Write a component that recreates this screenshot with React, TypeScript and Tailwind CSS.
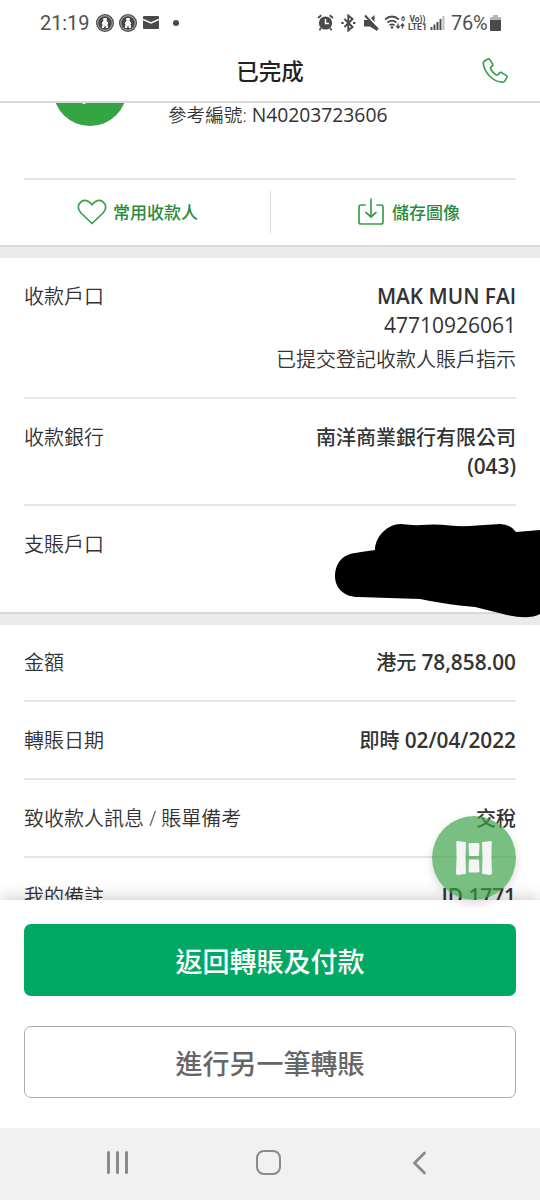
import React from 'react'

type RowProps = {
    label: string
    last?: boolean
    children?: React.ReactNode
}

const StatusBar: React.FC = () => (
    <div className="flex h-[45px] items-center pl-10 pr-[39px] font-['Roboto',sans-serif] text-[20px] text-[#505050]">
        <span className="w-[49px] whitespace-nowrap tracking-[-0.1px]">21:19</span>
        <div className="ml-[7px] flex items-center gap-[5px]">
            <BadgeIcon />
            <BadgeIcon />
        </div>
        <svg className="ml-[6px]" width="16" height="13" viewBox="0 0 16 13">
            <rect width="16" height="13" rx="1" fill="#4a4a4a" />
            <path d="M0 3.5 L8 7 L16 3.5" fill="none" stroke="#fff" strokeWidth="1.6" />
        </svg>
        <span className="ml-[14px] h-[6px] w-[6px] rounded-full bg-[#4a4a4a]" />
        <svg className="ml-auto" width="128" height="18" viewBox="0 0 128 18" fill="none" stroke="#4a4a4a">
            {/* alarm */}
            <circle cx="8.5" cy="9" r="6.6" fill="#4a4a4a" stroke="none" />
            <path d="M8.5 5v4.4h3.4" stroke="#fff" strokeWidth="1.5" />
            <path d="M1 4 4.3 1.2M16 4l-3.3-2.8M4 14l-1.6 2.2M13 14l1.6 2.2" strokeWidth="1.8" />
            {/* bluetooth */}
            <path d="M27.5 5l8 8-4.2 3.5V1.5l4.2 3.500-8 8" strokeWidth="1.9" />
            <path d="M24.3 9h2.4M36 9h2.4" strokeWidth="2.2" />
            {/* muted speaker */}
            <path d="M47 6h4l9 7v4l-7-4.5h-6zM54 4l3.5-3v7z" fill="#4a4a4a" stroke="none" />
            <path d="M48 1.5l13 14" strokeWidth="2" />
            {/* wifi */}
            <path d="M68 5.5q7-6 14 0M70.5 8.500q4.5-3.8 9 0M72.5 11.3q2.5-2 5 0" strokeWidth="1.7" />
            <circle cx="75" cy="13.5" r="1.3" fill="#4a4a4a" stroke="none" />
            <path d="M81 9.500v4.500M79.300 12l1.700 2 1.700-2M85.500 14.500V10M83.800 12l1.700-2 1.700 2" strokeWidth="1.3" />
            <text x="84" y="6.5" fontSize="7" fontWeight="700" fill="#4a4a4a" stroke="none">6</text>
            {/* volte */}
            <text x="92.5" y="7.500" fontSize="8.5" fontWeight="700" fill="#4a4a4a" stroke="none" textLength="16" lengthAdjust="spacingAndGlyphs">Vo))</text>
            <text x="91" y="16" fontSize="9" fontWeight="700" fill="#4a4a4a" stroke="none" textLength="19" lengthAdjust="spacingAndGlyphs">LTE1</text>
            {/* signal */}
            <path d="M114.5 16v-3M117.5 16v-5.500M120.5 16V8M123.5 16V5" strokeWidth="1.9" />
            <path d="M126.5 16V2" stroke="#bbb" strokeWidth="1.9" />
        </svg>
        <span className="ml-[6px] w-[39px] whitespace-nowrap tracking-[-0.3px]">76%</span>
        <svg width="11" height="16" viewBox="0 0 11 16">
            <path d="M3 0h5v2h3v3H0V2h3z" fill="#b5b5b5" />
            <path d="M0 5h11v10q0 1-1 1H1q-1 0-1-1z" fill="#4a4a4a" />
        </svg>
    </div>
)

const BadgeIcon: React.FC = () => (
    <svg width="18" height="18" viewBox="0 0 18 18">
        <circle cx="9" cy="9" r="9" fill="#4a4a4a" />
        <circle cx="9" cy="9" r="7.3" fill="none" stroke="#ddd" strokeWidth=".7" />
        <path d="M7.3 4h3.4v3l1.5 2-.7 1.5.7 3.500h-2.200l-1-3-1 3H5.800l.7-3.500L5.800 9l1.500-2z" fill="#fff" />
    </svg>
)

const Header: React.FC = () => (
    <header className="grid h-[58px] grid-cols-3 items-center border-b-2 border-[#d9d9d9] pb-1">
        <h1 className="col-start-2 pt-px text-center text-[22.5px] font-medium text-[#222]">已完成</h1>
        <svg className="mr-8 justify-self-end" width="26" height="26" viewBox="0 0 26 26" fill="none" stroke="#3a9f4c" strokeWidth="1.7" strokeLinejoin="round">
            <path d="M2.500 3L5.500 1.200q1.500-.7 2.500.7l2.500 4q.7 1.300-.4 2.200L9 9q-1 .9-.2 2.200 2 3.300 5.200 5.700 1.100.7 2.100-.2l1.400-1.900q1-.9 2.200-.2l4.600 3q1.100.8.5 2l-1.700 3q-1 1.700-2.800 1.600Q13 23.800 7 17.500 1.500 11 1.300 5.300q0-1.500 1.200-2.300z" />
        </svg>
    </header>
)

const Row: React.FC<RowProps> = ({ label, last, children }) => (
    <div className={last ? 'flex justify-between py-6' : 'flex justify-between border-b-2 border-[#e6e6e6] pt-6 pb-[23px]'}>
        <div className="font-[350] leading-[29px]">{label}</div>
        <div className="text-right leading-[29px]">{children}</div>
    </div>
)

// Latin letters and figures run slightly larger than the Chinese text
const Latin: React.FC<{ children: React.ReactNode }> = ({ children }) => (
    <span className="text-[20.8px] font-semibold">{children}</span>
)

const Divider: React.FC = () => (
    <div className="h-[13px] border-t-2 border-[#d8d8d8] bg-[#ebebeb]" />
)

const Summary: React.FC = () => (
    <div>
        <div className="mx-6 flex h-[77px] border-b-2 border-[#e4e4e4]">
            <div className="-mt-[51px] ml-[29px] h-[74px] w-[74px] shrink-0 rounded-full bg-[#35a442]">
                <div className="ml-[29px] mt-[48px] h-[4px] w-[4px] rounded-full bg-white" />
            </div>
            <p className="ml-[41px] text-[19.3px] leading-6">
                <span className="text-[18.6px] font-[350]">參考編號: </span>N40203723606
            </p>
        </div>
        <div className="mx-6 flex h-[65px] items-center pb-px text-[17px] font-medium text-[#2c8a3c]">
            <div className="flex w-[246px] items-center pl-[53px]">
                <svg width="30" height="26" viewBox="0 0 30 26" fill="none" stroke="#3a9f4c" strokeWidth="1.7" strokeLinejoin="round">
                    <path d="M15 24.500L4 14Q-.5 9 2.500 4.500 6-.5 11.500 2.500 13.500 3.500 15 5.800q1.500-2.300 3.500-3.300Q24-.5 27.500 4.500 30.500 9 26 14z" />
                </svg>
                <span className="ml-[6px] pt-px">常用收款人</span>
            </div>
            <div className="h-[42px] w-px bg-[#dcdcdc]" />
            <div className="flex flex-1 items-center pl-[87px]">
                <svg width="26" height="28" viewBox="0 0 26 28" fill="none" stroke="#3a9f4c" strokeWidth="1.7" strokeLinecap="round" strokeLinejoin="round">
                    <path d="M7 7H3Q1 7 1 9v15q0 2 2 2h20q2 0 2-2V9q0-2-2-2h-4M13 1v18M8 14.500l5 4.500 5-4.500" />
                </svg>
                <span className="ml-2 pt-px">儲存圖像</span>
            </div>
        </div>
    </div>
)

// Hand-drawn mark that hides the account number
const Scribble: React.FC = () => (
    <svg className="absolute left-[334px] top-[523px]" width="206" height="96" viewBox="334 523 206 96">
        <path d="M335 576C335 565 341 556 352 553.500Q362 551.500 375 550C375 537 387 524 401 524Q412 525.500 421 525Q437 524 450 525.500Q462 527 477 525.500L500 524Q510 524 516 532L540 530V614Q529 620 507 615L475 607Q443 604 420 599L358 597C344 597 335 588 335 576Z" fill="#000" />
    </svg>
)

const FloatingButton: React.FC = () => (
    <div className="absolute left-[432px] top-[816px] flex h-[84px] w-[84px] items-center justify-center rounded-full bg-[#39a047]/68 shadow-[0_4px_10px_rgba(0,0,0,0.14)]">
        <svg width="36" height="34" viewBox="0 0 36 34" fill="#f4f5f4">
            <path d="M1 0l8 1q1 0 1 1-1 15 0 30 0 1-1 1l-7 1q-2 0-2-2Q1 16 .3 2 0 0 1 0zM35 0l-8 1q-1 0-1 1 1 15 0 30 0 1 1 1l7 1q2 0 2-2-1-16-.3-30Q36 0 35 0z" />
            <path d="M14 2h8q1.500 0 1.500 1.500L23 14q0 1-1 1h-8q-1 0-1-1l-.5-10.500Q12.500 2 14 2zM14 18.500h8q1 0 1 1l.5 10.500q0 1.500-1.500 1.500h-8q-1.500 0-1.500-1.500l.5-10.500q0-1 1-1z" />
        </svg>
    </div>
)

const NavBar: React.FC = () => (
    <nav className="relative flex h-[72px] items-center bg-[#f1f1f1] pb-[3px] pl-[107px]">
        <div className="flex gap-[6px]">
            <i className="h-[23px] w-[3px] rounded-full bg-[#8a8a8a]" />
            <i className="h-[23px] w-[3px] rounded-full bg-[#8a8a8a]" />
            <i className="h-[23px] w-[3px] rounded-full bg-[#8a8a8a]" />
        </div>
        <div className="ml-[128px] h-[25px] w-[25px] rounded-[8px] border-[2.5px] border-[#8a8a8a]" />
        <svg className="ml-[131px]" width="15" height="24" viewBox="0 0 15 24" fill="none" stroke="#8a8a8a" strokeWidth="2.7" strokeLinecap="round">
            <path d="M12.500 2L2.500 12l10 10" />
        </svg>
    </nav>
)

const App: React.FC = () => {
    return (
        <div className="relative flex h-[1200px] w-[540px] flex-col overflow-hidden bg-white font-['Open_Sans','Noto_Sans_CJK_TC',sans-serif] text-[20px] text-[#333]">
            <StatusBar />
            <Header />
            <main className="h-[797px] overflow-hidden">
                <Summary />
                <Divider />
                <section className="px-6">
                    <Row label="收款戶口">
                        <p><Latin>MAK MUN FAI</Latin></p>
                        <p className="text-[21px]">47710926061</p>
                        <p className="mt-[5px] font-[350]">已提交登記收款人賬戶指示</p>
                    </Row>
                    <Row label="收款銀行">
                        <p className="font-medium">南洋商業銀行有限公司</p>
                        <p><Latin>(043)</Latin></p>
                    </Row>
                    <Row label="支賬戶口" last>
                        <p className="h-[58px]" />
                    </Row>
                </section>
                <Divider />
                <section className="-mt-px px-6">
                    <Row label="金額">
                        <p className="font-medium">港元 <Latin>78,858.00</Latin></p>
                    </Row>
                    <Row label="轉賬日期">
                        <p className="font-medium">即時 <Latin>02/04/2022</Latin></p>
                    </Row>
                    <Row label="致收款人訊息 / 賬單備考">
                        <p className="font-medium">交稅</p>
                    </Row>
                    <Row label="我的備註">
                        <p><Latin>ID 1771</Latin></p>
                    </Row>
                </section>
            </main>
            <footer className="relative flex h-[228px] flex-col gap-[30px] bg-white px-6 pt-6 text-[27px] font-medium shadow-[0_-2px_16px_rgba(0,0,0,0.2)]">
                <button className="h-[72px] rounded-[7px] bg-[#00a864] pt-[5px] text-white">返回轉賬及付款</button>
                <button className="h-[72px] rounded-[7px] border-[1.5px] border-[#acacac] pt-[5px] text-[#666]">進行另一筆轉賬</button>
            </footer>
            <NavBar />
            <Scribble />
            <FloatingButton />
        </div>
    )
}

export default App
